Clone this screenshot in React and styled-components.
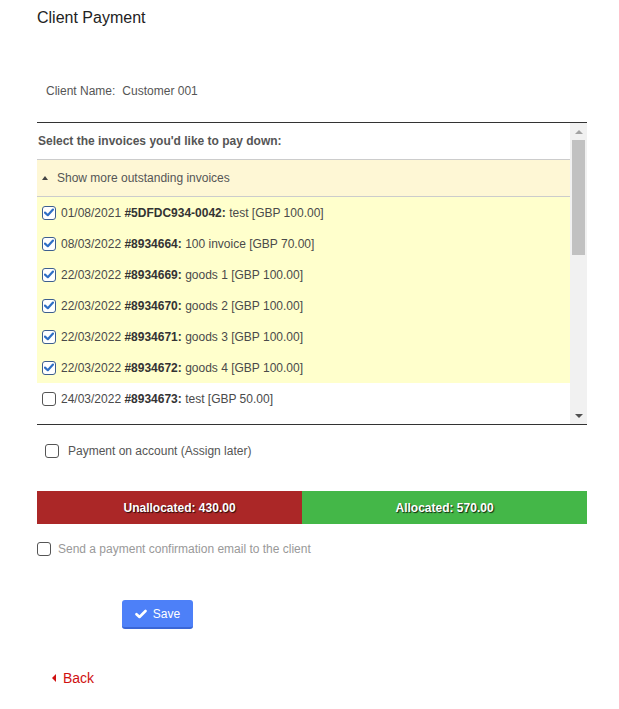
import React from "react";
import styled, { createGlobalStyle } from "styled-components";

const GlobalStyle = createGlobalStyle`
  html, body {
    margin: 0;
    padding: 0;
    background: #fff;
  }
  body {
    font-family: "Liberation Sans", Arial, sans-serif;
    font-size: 12px;
    color: #555;
  }
`;

const invoices = [
  { date: "01/08/2021", ref: "#5DFDC934-0042:", desc: "test", amount: "GBP 100.00", checked: true },
  { date: "08/03/2022", ref: "#8934664:", desc: "100 invoice", amount: "GBP 70.00", checked: true },
  { date: "22/03/2022", ref: "#8934669:", desc: "goods 1", amount: "GBP 100.00", checked: true },
  { date: "22/03/2022", ref: "#8934670:", desc: "goods 2", amount: "GBP 100.00", checked: true },
  { date: "22/03/2022", ref: "#8934671:", desc: "goods 3", amount: "GBP 100.00", checked: true },
  { date: "22/03/2022", ref: "#8934672:", desc: "goods 4", amount: "GBP 100.00", checked: true },
  { date: "24/03/2022", ref: "#8934673:", desc: "test", amount: "GBP 50.00", checked: false }
];

const Page = styled.div`
  width: 550px;
  padding: 9px 0 20px 37px;
`;

const Title = styled.h1`
  margin: 0;
  font-size: 16px;
  font-weight: normal;
  line-height: 18px;
  color: #222;
`;

const ClientRow = styled.div`
  margin-top: 56px;
  padding-left: 9px;
  line-height: 16px;
  display: flex;
  gap: 7px;
`;

const InvoiceBox = styled.div`
  margin-top: 23px;
  border-top: 1px solid #333;
  border-bottom: 1px solid #333;
  height: 301px;
  display: flex;
`;

const List = styled.div`
  flex: 1;
  overflow: hidden;
`;

const ListHeader = styled.div`
  height: 36px;
  display: flex;
  align-items: center;
  padding-left: 1px;
  font-weight: bold;
  border-bottom: 1px solid #ccc;
`;

const MoreRow = styled.div`
  height: 36px;
  display: flex;
  align-items: center;
  padding-left: 5px;
  gap: 9px;
  background: #fef7d5;
  border-bottom: 1px solid #ccc;
`;

const UpCaret = styled.span`
  width: 0;
  height: 0;
  border-left: 3.5px solid transparent;
  border-right: 3.5px solid transparent;
  border-bottom: 4px solid #444;
`;

const InvoiceRow = styled.div`
  height: 31px;
  display: flex;
  align-items: center;
  padding-left: 5px;
  gap: 5px;
  color: #4a4a4a;
  background: ${(p) => (p.$selected ? "#ffffcc" : "#fff")};
  b {
    color: #333;
  }
`;

const Box = styled.span`
  box-sizing: border-box;
  width: 14px;
  height: 14px;
  flex: none;
  border: 1px solid ${(p) => (p.$checked ? "#3d5f8f" : "#555")};
  border-radius: 3px;
  background: #fff;
  display: flex;
  align-items: center;
  justify-content: center;
`;

const Scrollbar = styled.div`
  width: 17px;
  background: #f1f1f1;
  display: flex;
  flex-direction: column;
  align-items: center;
`;

const ScrollArrow = styled.span`
  height: 17px;
  display: flex;
  align-items: center;
  justify-content: center;
  &::after {
    content: "";
    border-left: 4px solid transparent;
    border-right: 4px solid transparent;
    ${(p) => (p.$down ? "border-top: 4px solid #505050;" : "border-bottom: 4px solid #a3a3a3;")}
  }
`;

const Thumb = styled.div`
  width: 13px;
  height: 115px;
  background: #c1c1c1;
`;

const Spacer = styled.div`
  flex: 1;
`;

const CheckLine = styled.label`
  display: flex;
  align-items: center;
  gap: ${(p) => p.$gap || 9}px;
  margin-top: ${(p) => p.$top}px;
  padding-left: ${(p) => p.$indent || 0}px;
  color: ${(p) => (p.$muted ? "#999" : "#555")};
  line-height: 16px;
`;

const AllocationBar = styled.div`
  margin-top: 32px;
  height: 33px;
  display: flex;
  font-weight: bold;
  color: #fff;
  text-shadow: 1px 1px 1px rgba(0, 0, 0, 0.8);
`;

const Segment = styled.div`
  box-sizing: border-box;
  display: flex;
  align-items: center;
  justify-content: center;
  background: ${(p) => p.$color};
  flex: ${(p) => (p.$grow ? 1 : "none")};
  padding-left: ${(p) => p.$shift || 0}px;
`;

const Actions = styled.div`
  margin-top: 43px;
  padding-left: 85px;
`;

const SaveButton = styled.button`
  box-sizing: border-box;
  width: 71px;
  height: 29px;
  border: none;
  border-bottom: 2px solid #3a66d6;
  border-radius: 3px;
  background: #4d80f8;
  color: #fff;
  font-family: inherit;
  font-size: 12px;
  display: flex;
  align-items: center;
  justify-content: center;
  gap: 6px;
  padding: 1px 0 0;
`;

const BackLink = styled.a`
  margin-top: 41px;
  margin-left: 15px;
  display: inline-flex;
  align-items: center;
  gap: 7px;
  color: #d01010;
  font-size: 14px;
  text-decoration: none;
  line-height: 16px;
  &::before {
    content: "";
    border-top: 4px solid transparent;
    border-bottom: 4px solid transparent;
    border-right: 4px solid #d01010;
  }
`;

function Checkbox({ checked }) {
  return (
    <Box $checked={checked}>
      {checked && (
        <svg width="10" height="9" viewBox="0 0 10 9">
          <path d="M1 4.6 L3.8 7.2 L9 1.6" fill="none" stroke="#2f6fc4" strokeWidth="2.2" strokeLinecap="round" strokeLinejoin="round" />
        </svg>
      )}
    </Box>
  );
}

export default function App() {
  return (
    <>
      <GlobalStyle />
      <Page>
        <Title>Client Payment</Title>
        <ClientRow>
          <span>Client Name:</span>
          <span>Customer 001</span>
        </ClientRow>

        <InvoiceBox>
          <List>
            <ListHeader>Select the invoices you'd like to pay down:</ListHeader>
            <MoreRow>
              <UpCaret />
              Show more outstanding invoices
            </MoreRow>
            {invoices.map((inv, i) => (
              <InvoiceRow key={i} $selected={inv.checked}>
                <Checkbox checked={inv.checked} />
                <span>
                  {inv.date} <b>{inv.ref}</b> {inv.desc} [{inv.amount}]
                </span>
              </InvoiceRow>
            ))}
          </List>
          <Scrollbar>
            <ScrollArrow />
            <Thumb />
            <Spacer />
            <ScrollArrow $down />
          </Scrollbar>
        </InvoiceBox>

        <CheckLine $top={18} $indent={8} $gap={9}>
          <Checkbox checked={false} />
          Payment on account (Assign later)
        </CheckLine>

        <AllocationBar>
          <Segment $color="#ab2727" $shift={20} style={{ width: "48.2%" }}>Unallocated: 430.00</Segment>
          <Segment $color="#44b748" $grow>Allocated: 570.00</Segment>
        </AllocationBar>

        <CheckLine $top={17} $gap={7} $muted>
          <Checkbox checked={false} />
          Send a payment confirmation email to the client
        </CheckLine>

        <Actions>
          <SaveButton>
            <svg width="12" height="10" viewBox="0 0 12 10">
              <path d="M1.5 5.2 L4.5 8 L10.5 2" fill="none" stroke="#fff" strokeWidth="2.6" strokeLinecap="round" strokeLinejoin="round" />
            </svg>
            Save
          </SaveButton>
        </Actions>

        <BackLink href="#">Back</BackLink>
      </Page>
    </>
  );
}
